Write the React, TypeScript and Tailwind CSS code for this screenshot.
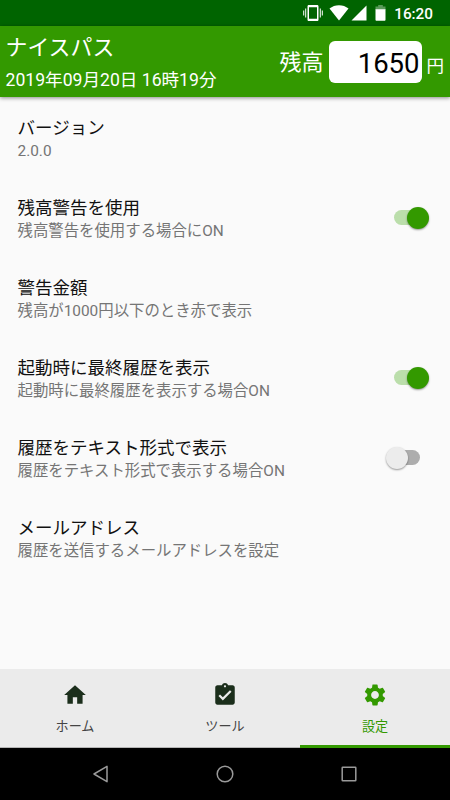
import { useState } from "react";
import type { IconType } from "react-icons";
import { MdAssignmentTurnedIn, MdHome, MdSettings } from "react-icons/md";

type TSetting = {
  id: string;
  title: string;
  summary: string;
  toggle?: boolean;
};

type TTab = {
  id: string;
  label: string;
  icon: IconType;
};

const settings: TSetting[] = [
  { id: "version", title: "バージョン", summary: "2.0.0" },
  {
    id: "warning",
    title: "残高警告を使用",
    summary: "残高警告を使用する場合にON",
    toggle: true,
  },
  {
    id: "amount",
    title: "警告金額",
    summary: "残高が1000円以下のとき赤で表示",
  },
  {
    id: "lastHistory",
    title: "起動時に最終履歴を表示",
    summary: "起動時に最終履歴を表示する場合ON",
    toggle: true,
  },
  {
    id: "textHistory",
    title: "履歴をテキスト形式で表示",
    summary: "履歴をテキスト形式で表示する場合ON",
    toggle: true,
  },
  {
    id: "mail",
    title: "メールアドレス",
    summary: "履歴を送信するメールアドレスを設定",
  },
];

const tabs: TTab[] = [
  { id: "home", label: "ホーム", icon: MdHome },
  { id: "tool", label: "ツール", icon: MdAssignmentTurnedIn },
  { id: "settings", label: "設定", icon: MdSettings },
];

const StatusBar = () => {
  return (
    <div className="flex h-[26px] shrink-0 items-center justify-end bg-[#006400] pr-[17px] text-white">
      <svg width="20" height="18" viewBox="0 0 20 18" fill="currentColor">
        <path
          fillRule="evenodd"
          d="M5.8 1h8.400c.7 0 1.300.6 1.300 1.300v13.400c0 .7-.6 1.300-1.300 1.300H5.800c-.7 0-1.300-.6-1.300-1.300V2.300C4.500 1.600 5.100 1 5.800 1zM6 3.200v11.600h8V3.200z"
        />
        <path d="M2.200 4.500h1v9h-1zM.2 6.500h1v5h-1zM16.800 4.500h1v9h-1zM18.800 6.500h1v5h-1z" />
      </svg>
      <svg
        className="ml-[6px]"
        width="20"
        height="18"
        viewBox="0 0 20 18"
        fill="currentColor"
      >
        <path d="M10 16.500 .5 4.600C3.200 2.500 6.400 1.300 10 1.300s6.800 1.200 9.500 3.300z" />
      </svg>
      <svg
        className="ml-[2px]"
        width="16"
        height="18"
        viewBox="0 0 16 18"
        fill="currentColor"
      >
        <path d="M.5 16.500 15.500 1.500v15z" />
      </svg>
      <svg
        className="ml-[8px]"
        width="11"
        height="18"
        viewBox="0 0 11 18"
        fill="currentColor"
      >
        <path opacity=".35" d="M3.200 1h4.600v1.600h2.700V6H.5V2.600h2.700z" />
        <path d="M.5 5.200h10v10.500c0 .6-.5 1-1 1h-8c-.5 0-1-.4-1-1z" />
      </svg>
      <span className="ml-[8px] pt-[2px] text-[15.300px] font-medium leading-[18px]">
        16:20
      </span>
    </div>
  );
};

const Header = () => {
  return (
    <header className="z-10 flex h-[71px] shrink-0 justify-between bg-[#339900] pl-[5.500px] pr-[6px] text-white shadow-[0_1px_4px_rgba(0,0,0,0.45)]">
      <div className="pt-[6px]">
        <h1 className="text-[21.900px] leading-8">ナイスパス</h1>
        <p className="text-[17.600px] leading-[33px]">
          2019年09月20日 16時19分
        </p>
      </div>
      <div className="flex items-center">
        <span className="pt-[2px] text-[22px]">残高</span>
        <span className="ml-[5px] h-[42px] w-[93px] rounded-md bg-white pr-[2px] pt-[2px] text-right text-[27.500px] leading-[42px] text-black">
          1650
        </span>
        <span className="ml-[5px] pt-[9px] text-[17.500px]">円</span>
      </div>
    </header>
  );
};

const Switch = ({
  checked,
  label,
  onChange,
}: {
  checked: boolean;
  label: string;
  onChange: () => void;
}) => {
  return (
    <button
      type="button"
      role="switch"
      aria-checked={checked}
      aria-label={label}
      onClick={onChange}
      className="relative flex h-[22px] w-[43px] items-center justify-center"
    >
      <span
        className={`h-[15px] w-[26px] rounded-full ${
          checked ? "bg-[#bbdeab]" : "bg-[#adadad]"
        }`}
      />
      <span
        className={`absolute top-0 size-[22px] rounded-full shadow-[0_1px_2px_rgba(0,0,0,0.4)] ${
          checked ? "right-0 bg-[#339900]" : "left-0 bg-[#ececec]"
        }`}
      />
    </button>
  );
};

const App = () => {
  const [activeTab, setActiveTab] = useState("settings");
  const [values, setValues] = useState<Record<string, boolean>>({
    warning: true,
    lastHistory: true,
    textHistory: false,
  });

  const handleToggle = (id: string) => {
    setValues({ ...values, [id]: !values[id] });
  };

  return (
    <div className="flex h-[800px] w-[450px] flex-col overflow-hidden bg-[#fafafa] font-[Roboto,'Noto_Sans_CJK_JP',sans-serif]">
      <StatusBar />
      <Header />

      <main className="flex-1 pt-[0.500px]">
        {settings.map((item) => (
          <div
            key={item.id}
            className="flex h-20 items-center justify-between pl-[17.500px] pr-[21.500px]"
          >
            <div className="pt-[3px]">
              <p className="text-[17.500px] leading-6 text-[#111111]">
                {item.title}
              </p>
              <p className="text-[15.400px] leading-[22px] text-[#757575]">
                {item.summary}
              </p>
            </div>
            {item.toggle && (
              <Switch
                checked={values[item.id]}
                label={item.title}
                onChange={() => handleToggle(item.id)}
              />
            )}
          </div>
        ))}
      </main>

      <nav className="grid h-[79px] shrink-0 grid-cols-3 bg-[#ebebeb]">
        {tabs.map((tab) => (
          <button
            key={tab.id}
            type="button"
            onClick={() => setActiveTab(tab.id)}
            className={`flex flex-col items-center pt-[13px] ${
              activeTab === tab.id
                ? "border-b-[3px] border-[#339900] text-[#339900]"
                : "border-b border-[#b5b5b5] text-[#444444]"
            }`}
          >
            <tab.icon
              className={`size-[26px] ${
                activeTab === tab.id ? "text-[#339900]" : "text-[#1b2e1b]"
              }`}
            />
            <span className="mt-[9px] text-[13.100px] leading-5">
              {tab.label}
            </span>
          </button>
        ))}
      </nav>

      <div className="flex h-[52px] shrink-0 items-center justify-between bg-black pl-[92px] pr-[93px] text-[#9a9a9a]">
        <svg
          width="17"
          height="18"
          viewBox="0 0 17 18"
          fill="none"
          stroke="currentColor"
          strokeWidth="1.500"
          strokeLinejoin="round"
        >
          <path d="M15 1.300v15.400L2 9z" />
        </svg>
        <svg
          width="18"
          height="18"
          viewBox="0 0 18 18"
          fill="none"
          stroke="currentColor"
          strokeWidth="1.500"
        >
          <circle cx="9" cy="9" r="7.800" />
        </svg>
        <svg
          width="16"
          height="16"
          viewBox="0 0 16 16"
          fill="none"
          stroke="currentColor"
          strokeWidth="1.500"
        >
          <rect x="1.200" y="1.200" width="13.600" height="13.600" rx=".6" />
        </svg>
      </div>
    </div>
  );
};

export default App;
